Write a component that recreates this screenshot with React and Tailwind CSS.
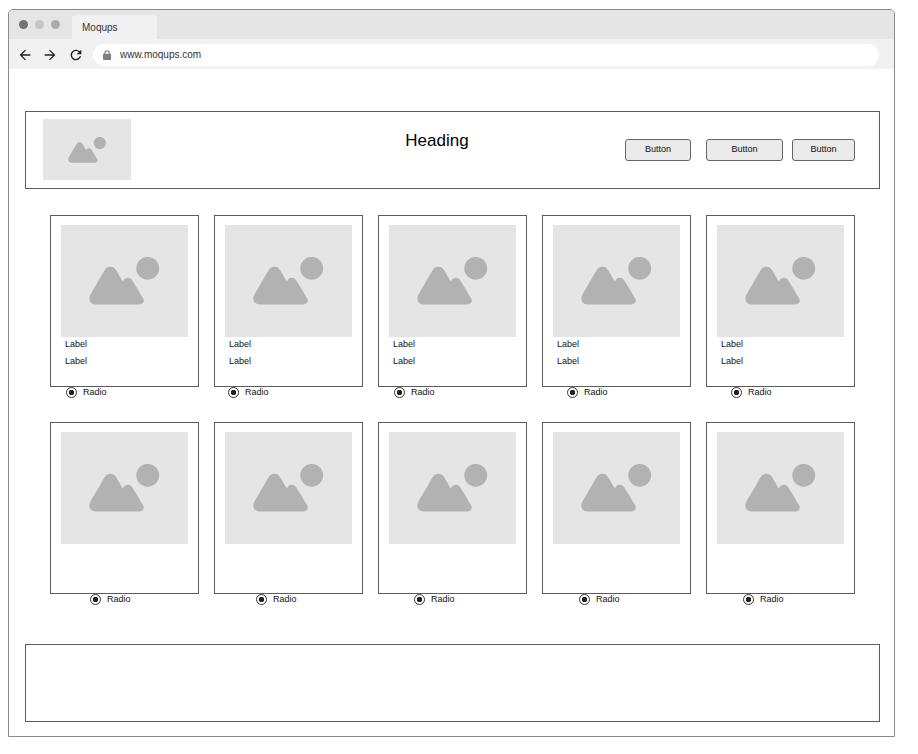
import { MdArrowBack, MdArrowForward, MdRefresh } from "react-icons/md";

const products = [
  { id: 1, indent: "pl-4", labels: ["Label", "Label"] },
  { id: 2, indent: "pl-[14px]", labels: ["Label", "Label"] },
  { id: 3, indent: "pl-4", labels: ["Label", "Label"] },
  { id: 4, indent: "pl-[25px]", labels: ["Label", "Label"] },
  { id: 5, indent: "pl-[25px]", labels: ["Label", "Label"] },
  { id: 6, indent: "pl-10", labels: [] },
  { id: 7, indent: "pl-[42px]", labels: [] },
  { id: 8, indent: "pl-9", labels: [] },
  { id: 9, indent: "pl-[37px]", labels: [] },
  { id: 10, indent: "pl-[37px]", labels: [] },
];

const actions = [
  { id: "first", className: "w-[66px]" },
  { id: "second", className: "ml-[15px] w-[77px]" },
  { id: "third", className: "ml-[9px] w-[63px]" },
];

function ImagePlaceholder({ className, iconClassName }) {
  return (
    <div className={`flex items-center justify-center bg-[#e5e5e5] ${className}`}>
      <svg viewBox="0 0 72 48" className={iconClassName} fill="#b2b2b2" aria-hidden="true">
        <circle cx="58.7" cy="11.3" r="11.4" />
        <path d="M15.6 13.2 C18.3 8.6 24.5 8.6 27.2 13.2 L33.7 24.4 L35 22.7 C37 20.1 41 20.1 43 22.9 C45.2 26 50.8 35.6 54 41 C56 44.4 54 47.5 50 47.5 H7 C1 47.5 -1.2 42.3 1.4 37.6 Z" />
      </svg>
    </div>
  );
}

function LockIcon() {
  return (
    <svg viewBox="0 0 12 12" className="size-3" aria-hidden="true">
      <path d="M3.8 5.5 V4 a2.2 2.2 0 0 1 4.4 0 V5.5" fill="none" stroke="#808080" strokeWidth="1.1" />
      <rect x="2" y="4.8" width="8" height="6.2" rx="0.8" fill="#808080" />
    </svg>
  );
}

function BrowserBar() {
  return (
    <>
      <div className="flex h-[29px] items-end bg-[#e5e5e5]">
        <div className="flex w-[63px] gap-[7px] self-center pl-[10px]">
          <span className="size-[9px] rounded-full bg-[#737373]" />
          <span className="size-[9px] rounded-full bg-[#c4c4c4]" />
          <span className="size-[9px] rounded-full bg-[#ababab]" />
        </div>
        <button
          type="button"
          className="h-6 w-[85px] rounded-t bg-[#f1f1f1] pl-[10px] text-left text-[10px] text-[#333]"
        >
          Moqups
        </button>
      </div>
      <div className="flex h-[30px] items-center bg-[#f1f1f1] pt-px pr-[15px] pl-2 text-[#222]">
        <button type="button" aria-label="Back">
          <MdArrowBack className="size-4" />
        </button>
        <button type="button" aria-label="Forward" className="ml-[9px]">
          <MdArrowForward className="size-4" />
        </button>
        <button type="button" aria-label="Reload" className="ml-[10px]">
          <MdRefresh className="size-4" />
        </button>
        <label className="ml-[9px] flex h-[22px] flex-1 items-center gap-[7px] rounded-full bg-white pl-2">
          <LockIcon />
          <input
            type="text"
            aria-label="Address"
            defaultValue="www.moqups.com"
            className="flex-1 bg-transparent text-[10px] text-[#333] outline-none"
          />
        </label>
      </div>
    </>
  );
}

function ProductCard({ id, indent, labels }) {
  return (
    <div>
      <div className="h-[172px] border border-[#5c5c5c] px-[10px] pt-[9px]">
        <ImagePlaceholder className="h-28" iconClassName="h-12 w-[72px]" />
        <div className="flex flex-col gap-[3px] pl-1">
          {labels.map((text, i) => (
            <p key={i} className="leading-[14px]">
              {text}
            </p>
          ))}
        </div>
      </div>
      <label className={`flex h-[11px] items-center gap-[6px] leading-[11px] ${indent}`}>
        <input
          type="radio"
          name={`product-${id}`}
          defaultChecked
          className="size-[11px] appearance-none rounded-full border border-[#333] bg-white checked:bg-[radial-gradient(circle,#222_0_2.5px,transparent_3px)]"
        />
        Radio
      </label>
    </div>
  );
}

export default function App() {
  return (
    <div className="min-h-screen bg-white pt-[9px] pr-[23px] pb-4 pl-2 font-['Liberation_Sans',Arial,sans-serif] text-[9px] text-[#111]">
      <div className="overflow-hidden rounded-t-[5px] border border-[#8a8a8a] bg-white">
        <BrowserBar />
        <main className="pt-[42px] pr-[14px] pb-[14px] pl-4">
          <header className="grid grid-cols-[1fr_auto_1fr] items-center border border-[#5c5c5c] pt-[7px] pr-6 pb-2 pl-[17px]">
            <ImagePlaceholder className="h-[61px] w-[88px]" iconClassName="h-[26px] w-[39px]" />
            <h1 className="self-start pt-3 pr-6 text-[17px] leading-5 text-black">Heading</h1>
            <div className="flex justify-end">
              {actions.map((action) => (
                <button
                  key={action.id}
                  type="button"
                  className={`h-[22px] rounded-[3px] border border-[#666] bg-[#eaeaea] pb-px leading-[18px] ${action.className}`}
                >
                  Button
                </button>
              ))}
            </div>
          </header>
          <section className="mt-[26px] grid grid-cols-5 gap-x-[15px] gap-y-6 px-[25px]">
            {products.map((product) => (
              <ProductCard key={product.id} {...product} />
            ))}
          </section>
          <footer className="mt-[39px] h-[78px] border border-[#5c5c5c]" />
        </main>
      </div>
    </div>
  );
}
